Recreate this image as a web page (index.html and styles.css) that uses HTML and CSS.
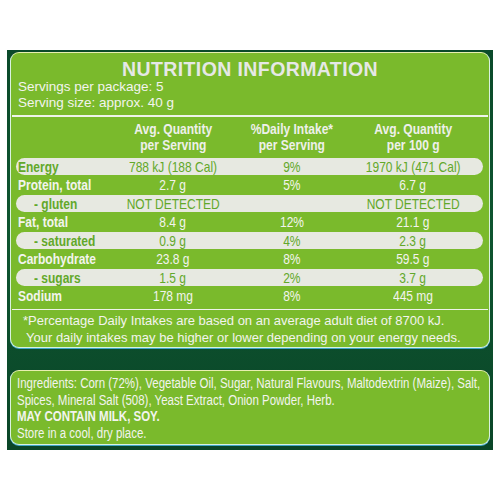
FILE: index.html
```html
<!DOCTYPE html>
<html>
<head>
<meta charset="utf-8">
<link rel="stylesheet" href="styles.css">
</head>
<body>
<div class="pack">
  <section class="panel nutrition">
    <h1 class="title">NUTRITION INFORMATION</h1>
    <div class="servings">
      <div>Servings per package: 5</div>
      <div>Serving size: approx. 40 g</div>
    </div>
    <div class="rule"></div>
    <div class="table">
      <div class="row head">
        <div class="label"></div>
        <div class="val"><span class="nar">Avg. Quantity<br>per Serving</span></div>
        <div class="val"><span class="nar">%Daily Intake*<br>per Serving</span></div>
        <div class="val"><span class="nar">Avg. Quantity<br>per 100 g</span></div>
      </div>
      <div class="row pill">
        <div class="label"><span class="nar">Energy</span></div>
        <div class="val"><span class="nar">788 kJ (188 Cal)</span></div>
        <div class="val"><span class="nar">9%</span></div>
        <div class="val"><span class="nar">1970 kJ (471 Cal)</span></div>
      </div>
      <div class="row">
        <div class="label"><span class="nar">Protein, total</span></div>
        <div class="val"><span class="nar">2.7 g</span></div>
        <div class="val"><span class="nar">5%</span></div>
        <div class="val"><span class="nar">6.7 g</span></div>
      </div>
      <div class="row pill">
        <div class="label sub"><span class="nar">- gluten</span></div>
        <div class="val"><span class="nar">NOT DETECTED</span></div>
        <div class="val"></div>
        <div class="val"><span class="nar">NOT DETECTED</span></div>
      </div>
      <div class="row">
        <div class="label"><span class="nar">Fat, total</span></div>
        <div class="val"><span class="nar">8.4 g</span></div>
        <div class="val"><span class="nar">12%</span></div>
        <div class="val"><span class="nar">21.1 g</span></div>
      </div>
      <div class="row pill">
        <div class="label sub"><span class="nar">- saturated</span></div>
        <div class="val"><span class="nar">0.9 g</span></div>
        <div class="val"><span class="nar">4%</span></div>
        <div class="val"><span class="nar">2.3 g</span></div>
      </div>
      <div class="row">
        <div class="label"><span class="nar">Carbohydrate</span></div>
        <div class="val"><span class="nar">23.8 g</span></div>
        <div class="val"><span class="nar">8%</span></div>
        <div class="val"><span class="nar">59.5 g</span></div>
      </div>
      <div class="row pill">
        <div class="label sub"><span class="nar">- sugars</span></div>
        <div class="val"><span class="nar">1.5 g</span></div>
        <div class="val"><span class="nar">2%</span></div>
        <div class="val"><span class="nar">3.7 g</span></div>
      </div>
      <div class="row">
        <div class="label"><span class="nar">Sodium</span></div>
        <div class="val"><span class="nar">178 mg</span></div>
        <div class="val"><span class="nar">8%</span></div>
        <div class="val"><span class="nar">445 mg</span></div>
      </div>
    </div>
    <div class="rule"></div>
    <p class="note">*Percentage Daily Intakes are based on an average adult diet of 8700 kJ.<br><span class="indent">Your daily intakes may be higher or lower depending on your energy needs.</span></p>
  </section>
  <section class="panel ingredients">
    <div class="ing-text">
      <p>Ingredients: Corn (72%), Vegetable Oil, Sugar, Natural Flavours, Maltodextrin (Maize), Salt,<br>Spices, Mineral Salt (508), Yeast Extract, Onion Powder, Herb.</p>
      <p class="bold">MAY CONTAIN MILK, SOY.</p>
      <p>Store in a cool, dry place.</p>
    </div>
  </section>
</div>
</body>
</html>
```
FILE: styles.css
```css
html, body {
  margin: 0;
  padding: 0;
  background: #ffffff;
}
body {
  font-family: "Liberation Sans", Arial, sans-serif;
  color: #f3f4ee;
}
.pack {
  margin: 50px 0 0 7px;
  width: 486px;
  height: 400px;
  box-sizing: border-box;
  padding: 2px 3px 5px 3px;
  background: linear-gradient(180deg, #0b4a2a 0%, #0e5530 45%, #0a4628 100%);
  display: flex;
  flex-direction: column;
  gap: 22px;
}
.panel {
  box-sizing: border-box;
  width: 480px;
  border-radius: 9px;
  background: #7aba2c;
  border: 1.5px solid #d9f2df;
  border-top-color: #e9efb0;
  box-shadow: 0 1px 0 #3fa6c8;
  overflow: hidden;
}
.nutrition {
  height: 296px;
  padding: 6px 1px 0 1px;
}
.title {
  margin: 0;
  font-family: "Liberation Sans", Arial, sans-serif;
  font-weight: bold;
  font-size: 19.5px;
  line-height: 21px;
  letter-spacing: 0.4px;
  text-align: center;
  color: #e6e8e6;
}
.servings {
  padding-left: 6px;
  font-size: 13.5px;
  line-height: 16px;
  margin-top: -1px;
}
.rule {
  height: 1.5px;
  background: #eef3ea;
  margin: 4px 0 0 0;
}
.table {
  margin: 4px 0 0 4px;
  width: 467px;
}
.nar {
  display: inline-block;
  transform: scaleX(0.8);
  transform-origin: center;
  white-space: nowrap;
}
.label .nar {
  transform-origin: left center;
}
.row {
  display: grid;
  grid-template-columns: 97px 120px 118px 124px 8px;
  height: 18.5px;
  align-items: center;
  font-size: 15px;
  line-height: 17px;
}
.row.head {
  height: auto;
  font-weight: bold;
  font-size: 14px;
  line-height: 16px;
  padding-bottom: 4px;
  color: #eef0ea;
}
.row.head .nar {
  transform: scaleX(0.86);
}
.row.pill {
  background: #e7e9e1;
  border-radius: 9px;
  color: #62a82a;
  height: 17px;
  margin: 1px 0 0.5px 0;
}
.label {
  padding-left: 2px;
  font-weight: bold;
  white-space: nowrap;
}
.label.sub {
  padding-left: 18px;
}
.val {
  text-align: center;
  white-space: nowrap;
}
.note {
  margin: 3px 0 0 11px;
  font-size: 13px;
  line-height: 16.5px;
}
.indent {
  padding-left: 3px;
}
.ingredients {
  height: 75px;
  padding: 4px 6px 0 6px;
  font-size: 14px;
  line-height: 16.6px;
}
.ing-text {
  transform: scaleX(0.82);
  transform-origin: left top;
  white-space: nowrap;
}
.ing-text p {
  margin: 0;
}
.ing-text .bold {
  font-weight: bold;
}
```
